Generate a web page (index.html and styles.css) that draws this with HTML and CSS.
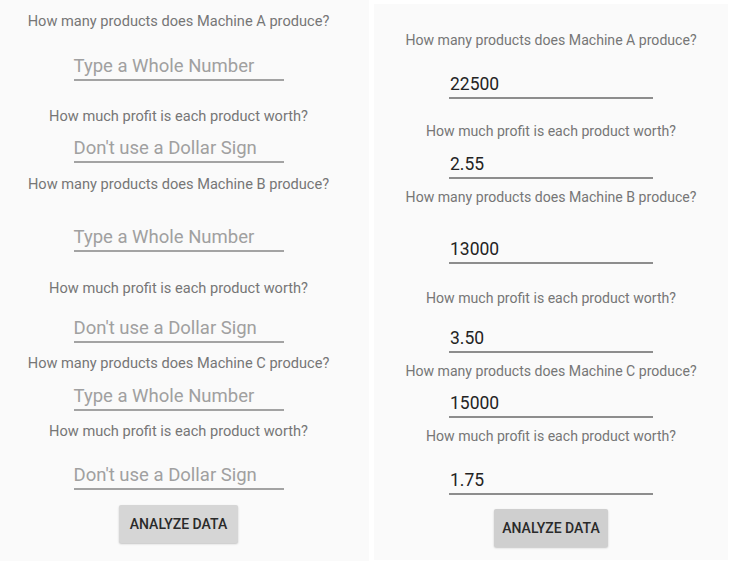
FILE: index.html
```html
<!DOCTYPE html>
<html>
<head>
<meta charset="utf-8">
<link rel="stylesheet" href="styles.css">
</head>
<body>
<div class="screens">
  <section class="panel panel-left">
    <div class="label m13">How many products does Machine A produce?</div>
    <div class="field hint m26">Type a Whole Number</div>
    <div class="label m27">How much profit is each product worth?</div>
    <div class="field hint m13">Don't use a Dollar Sign</div>
    <div class="label m13">How many products does Machine B produce?</div>
    <div class="field hint m34">Type a Whole Number</div>
    <div class="label m28">How much profit is each product worth?</div>
    <div class="field hint m21">Don't use a Dollar Sign</div>
    <div class="label m12">How many products does Machine C produce?</div>
    <div class="field hint m14">Type a Whole Number</div>
    <div class="label m12">How much profit is each product worth?</div>
    <div class="field hint m25">Don't use a Dollar Sign</div>
    <button class="btn m15">Analyze Data</button>
  </section>
  <section class="panel panel-right">
    <div class="label m28">How many products does Machine A produce?</div>
    <div class="field value m25">22500</div>
    <div class="label m24">How much profit is each product worth?</div>
    <div class="field value m14">2.55</div>
    <div class="label m10">How many products does Machine B produce?</div>
    <div class="field value m33">13000</div>
    <div class="label m26">How much profit is each product worth?</div>
    <div class="field value m21">3.50</div>
    <div class="label m10">How many products does Machine C produce?</div>
    <div class="field value m13">15000</div>
    <div class="label m10">How much profit is each product worth?</div>
    <div class="field value m25">1.75</div>
    <button class="btn m14">Analyze Data</button>
  </section>
</div>
</body>
</html>
```
FILE: styles.css
```css
html, body {
  margin: 0;
  padding: 0;
  background: #ffffff;
}
body {
  width: 733px;
  height: 565px;
  overflow: hidden;
  font-family: Roboto, "Liberation Sans", sans-serif;
}
.screens {
  display: flex;
  gap: 5px;
  align-items: flex-start;
}
.panel {
  background: #fafafa;
  display: flex;
  flex-direction: column;
  align-items: center;
  box-sizing: border-box;
}
.panel-left {
  width: 369px;
  height: 561px;
  padding-right: 12px;
}
.panel-right {
  width: 354px;
  height: 556px;
  margin-top: 4px;
}
.label {
  font-size: 14.1px;
  line-height: 16px;
  height: 16px;
  color: #767676;
  white-space: nowrap;
}
.panel-left .label {
  font-size: 14.6px;
}
.field {
  box-sizing: border-box;
  height: 26px;
  line-height: 22px;
  padding: 0 0 2px 1px;
  border-bottom: 2px solid #a3a3a3;
  white-space: nowrap;
}
.panel-left .field {
  width: 210px;
  font-size: 18.5px;
  padding-left: 0;
}
.panel-right .field {
  width: 204px;
  font-size: 17.5px;
  border-bottom-color: #8d8d8d;
}
.hint {
  color: #a0a0a0;
}
.value {
  color: #232323;
}
.btn {
  font-family: Roboto, "Liberation Sans", sans-serif;
  font-weight: 500;
  font-size: 14px;
  text-transform: uppercase;
  color: #2a2a2a;
  background: #d6d6d6;
  border: none;
  border-radius: 2px;
  height: 38px;
  padding: 0;
  box-shadow: 0 1px 2px rgba(0, 0, 0, 0.22);
}
.panel-left .btn {
  width: 119px;
}
.panel-right .btn {
  width: 114px;
  background: #cfcfcf;
}
.m10 { margin-top: 10px; }
.m12 { margin-top: 12px; }
.m13 { margin-top: 13px; }
.m14 { margin-top: 14px; }
.m15 { margin-top: 15px; }
.m21 { margin-top: 21px; }
.m24 { margin-top: 24px; }
.m25 { margin-top: 25px; }
.m26 { margin-top: 26px; }
.m27 { margin-top: 27px; }
.m28 { margin-top: 28px; }
.m33 { margin-top: 33px; }
.m34 { margin-top: 34px; }
```
